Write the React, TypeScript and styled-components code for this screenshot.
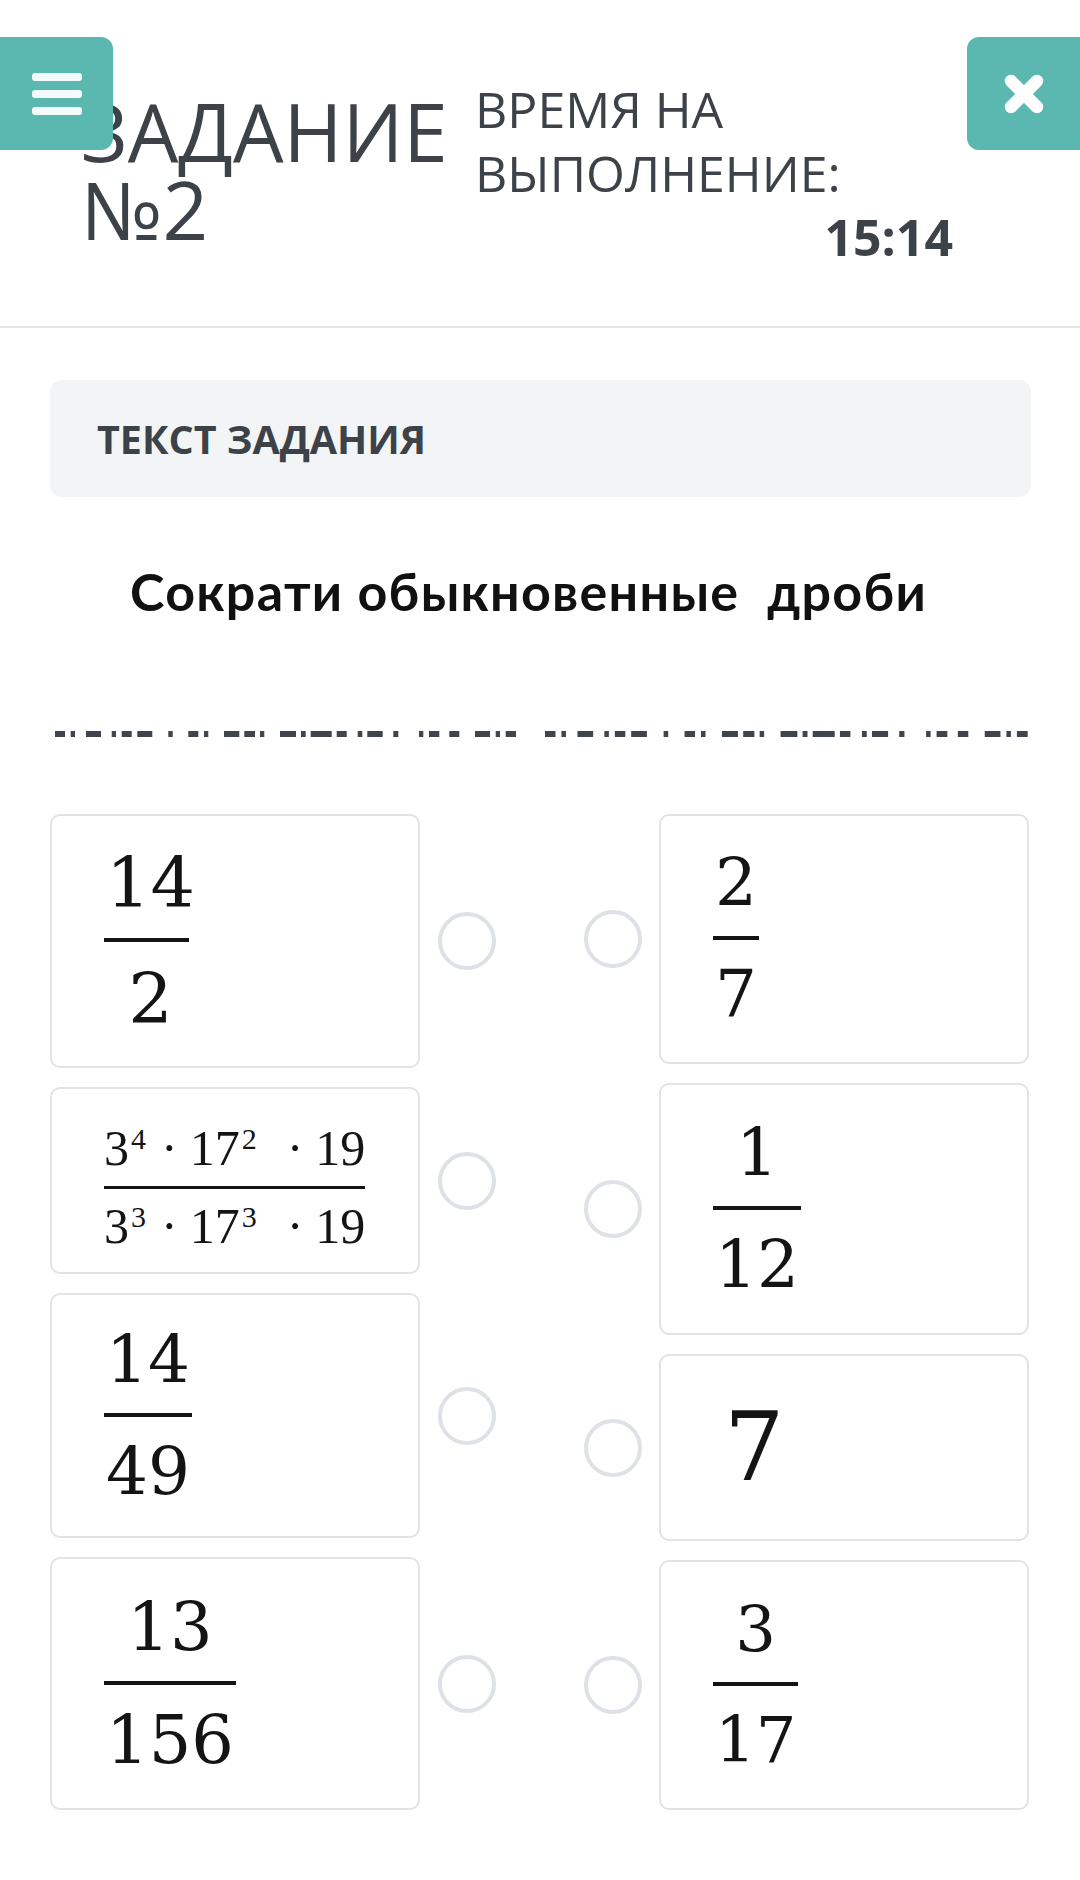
import React from "react";
import styled, { createGlobalStyle } from "styled-components";

const GlobalStyle = createGlobalStyle`
  html, body { margin: 0; padding: 0; background: #ffffff; }
  body { font-family: "Open Sans", "Noto Sans", sans-serif; color: #3d4249; }
  * { box-sizing: border-box; }
`;

const Page = styled.div`
  position: relative;
  width: 1080px;
  min-height: 1880px;
  background: #ffffff;
  overflow: hidden;
`;

const SideButton = styled.button<{ $side: "left" | "right" }>`
  position: absolute;
  top: 37px;
  ${(p) => (p.$side === "left" ? "left: 0; border-radius: 0 12px 12px 0;" : "right: 0; border-radius: 12px 0 0 12px;")}
  width: 113px;
  height: 113px;
  border: none;
  padding: 0;
  background: #5ab8b1;
  display: flex;
  align-items: center;
  justify-content: center;
  z-index: 2;
  cursor: pointer;
`;

const Header = styled.header`
  display: flex;
  align-items: flex-start;
  height: 328px;
  padding: 77px 0 0 81px;
  border-bottom: 2px solid #e4e5e7;
`;

const Title = styled.h1`
  margin: 15px 0 0;
  width: 380px;
  flex: none;
  font-size: 80px;
  line-height: 78px;
  font-weight: 400;
  color: #3d4249;
`;

const Timer = styled.div`
  margin-left: 14px;
  width: 478px;
  flex: none;
  display: flex;
  flex-direction: column;
  font-size: 50px;
  line-height: 64px;
  color: #3d4249;
`;

const TimerLabel = styled.div``;

const TimerValue = styled.div`
  font-weight: 700;
  text-align: right;
`;

const Main = styled.main`
  padding: 52px 49px 0 50px;
  display: flex;
  flex-direction: column;
`;

const TaskLabelBox = styled.div`
  height: 117px;
  border-radius: 12px;
  background: #f3f4f6;
  display: flex;
  align-items: center;
  padding-left: 47px;
  font-size: 39.5px;
  font-weight: 700;
  color: #3d4249;
`;

const Statement = styled.div`
  margin-top: 68px;
  padding-left: 80px;
  font-family: Lato, "Open Sans", sans-serif;
  font-weight: 700;
  font-size: 52px;
  line-height: 52px;
  letter-spacing: 1.3px;
  color: #111111;
  white-space: pre;
`;

const DashRow = styled.div`
  margin-top: 114px;
  padding-left: 5px;
  height: 6px;
  display: flex;
`;

const OptionsGrid = styled.div`
  margin-top: 77px;
  display: grid;
  grid-template-columns: 446px 447px;
  column-gap: 88px;
`;

const Column = styled.div`
  display: flex;
  flex-direction: column;
  gap: 19px;
`;

const OptionRow = styled.div<{ $gap: number }>`
  display: flex;
  align-items: center;
  gap: ${(p) => p.$gap}px;
`;

const Card = styled.div<{ $h: number; $offset?: number }>`
  width: 370px;
  height: ${(p) => p.$h}px;
  flex: none;
  border: 2px solid #e1e3e6;
  border-radius: 10px;
  background: #ffffff;
  display: flex;
  align-items: center;
  padding: ${(p) => p.$offset || 0}px 0 0 52px;
`;

const Radio = styled.span`
  width: 58px;
  height: 58px;
  flex: none;
  border-radius: 50%;
  border: 4px solid #dee2e6;
  background: #ffffff;
`;

const Frac = styled.div<{ $size: number; $serif?: string }>`
  display: inline-flex;
  flex-direction: column;
  align-items: stretch;
  font-family: ${(p) => p.$serif || '"DejaVu Serif"'}, serif;
  font-size: ${(p) => p.$size}px;
  line-height: 1;
  color: #141414;
`;

const FracPart = styled.div<{ $pad?: number }>`
  text-align: center;
  white-space: nowrap;
  padding: 0 ${(p) => (p.$pad === undefined ? 2 : p.$pad)}px;
`;

const FracBar = styled.div<{ $thick: number; $above: number; $below: number; $inset?: number }>`
  height: ${(p) => p.$thick}px;
  background: #141414;
  margin: ${(p) => p.$above}px ${(p) => p.$inset || 0}px ${(p) => p.$below}px 0;
`;

const Single = styled.div<{ $size: number }>`
  margin-left: 11px;
  font-family: "DejaVu Serif", serif;
  font-size: ${(p) => p.$size}px;
  line-height: 1;
  color: #141414;
`;

const Sup = styled.span`
  font-size: 30px;
  vertical-align: 16px;
  margin-left: 2px;
`;

const Dot = styled.span<{ $ml: number }>`
  margin-left: ${(p) => p.$ml}px;
  margin-right: 12px;
`;

const dashSegments: [number, number][] = [
  [0, 10], [15.7, 20], [31, 46], [56.7, 61], [66.7, 76.7], [82.3, 97.3],
  [113.3, 117.7], [133.3, 143.3], [149, 153.3], [169, 184.3], [189.3, 200],
  [205, 209.3], [225, 241], [246, 250.7], [255.7, 276.7], [281.7, 291.7],
  [302.7, 307.3], [312.3, 327.7], [338.3, 343.3], [364, 368.3], [374, 384.3],
  [394.3, 404.3], [420, 435], [440.7, 445], [450.7, 461],
];

const dashCopies = [
  { offset: 0, scale: 1 },
  { offset: 490, scale: 1.047 },
];

function DashedRule() {
  return (
    <svg width="973" height="6" viewBox="0 0 973 6">
      {dashCopies.map(({ offset, scale }) =>
        dashSegments.map(([a, b], i) => (
          <rect key={`${offset}-${i}`} x={offset + a * scale} y={0} width={(b - a) * scale} height={6} fill="#3f454d" />
        ))
      )}
    </svg>
  );
}

function MenuIcon() {
  return (
    <svg width="50" height="42" viewBox="0 0 50 42">
      <rect x="0" y="0" width="50" height="8" rx="3" fill="#f3fbfa" />
      <rect x="0" y="17" width="50" height="8" rx="3" fill="#f3fbfa" />
      <rect x="0" y="34" width="50" height="8" rx="3" fill="#f3fbfa" />
    </svg>
  );
}

function CloseIcon() {
  return (
    <svg width="42" height="42" viewBox="0 0 42 42">
      <path d="M8 8 L34 34 M34 8 L8 34" stroke="#ffffff" strokeWidth="12.5" strokeLinecap="round" />
    </svg>
  );
}

type SimpleFrac = { num: string; den: string; size: number; inset?: number };

function Fraction({ num, den, size, inset }: SimpleFrac) {
  return (
    <Frac $size={size}>
      <FracPart>{num}</FracPart>
      <FracBar $thick={4} $above={20} $below={22} $inset={inset} />
      <FracPart>{den}</FracPart>
    </Frac>
  );
}

function PowerRow({ a, b }: { a: string; b: string }) {
  return (
    <FracPart $pad={0}>
      3<Sup>{a}</Sup>
      <Dot $ml={15}>·</Dot>17<Sup>{b}</Sup>
      <Dot $ml={30}>·</Dot>19
    </FracPart>
  );
}

function PowerFraction() {
  return (
    <Frac $size={50} $serif='"Liberation Serif"'>
      <PowerRow a="4" b="2" />
      <FracBar $thick={3} $above={13} $below={12} />
      <PowerRow a="3" b="3" />
    </Frac>
  );
}

export default function App() {
  return (
    <Page>
      <GlobalStyle />
      <SideButton $side="left" aria-label="Меню">
        <MenuIcon />
      </SideButton>
      <SideButton $side="right" aria-label="Закрыть">
        <CloseIcon />
      </SideButton>

      <Header>
        <Title>ЗАДАНИЕ №2</Title>
        <Timer>
          <TimerLabel>ВРЕМЯ НА ВЫПОЛНЕНИЕ:</TimerLabel>
          <TimerValue>15:14</TimerValue>
        </Timer>
      </Header>

      <Main>
        <TaskLabelBox>ТЕКСТ ЗАДАНИЯ</TaskLabelBox>
        <Statement>Сократи обыкновенные  дроби</Statement>
        <DashRow>
          <DashedRule />
        </DashRow>

        <OptionsGrid>
          <Column>
            <OptionRow $gap={18}>
              <Card $h={254}>
                <Fraction num="14" den="2" size={70} inset={8} />
              </Card>
              <Radio />
            </OptionRow>
            <OptionRow $gap={18}>
              <Card $h={187} $offset={12}>
                <PowerFraction />
              </Card>
              <Radio />
            </OptionRow>
            <OptionRow $gap={18}>
              <Card $h={245}>
                <Fraction num="14" den="49" size={66} />
              </Card>
              <Radio />
            </OptionRow>
            <OptionRow $gap={18}>
              <Card $h={253}>
                <Fraction num="13" den="156" size={67} />
              </Card>
              <Radio />
            </OptionRow>
          </Column>

          <Column>
            <OptionRow $gap={17}>
              <Radio />
              <Card $h={250}>
                <Fraction num="2" den="7" size={66} />
              </Card>
            </OptionRow>
            <OptionRow $gap={17}>
              <Radio />
              <Card $h={252}>
                <Fraction num="1" den="12" size={66} />
              </Card>
            </OptionRow>
            <OptionRow $gap={17}>
              <Radio />
              <Card $h={187}>
                <Single $size={95}>7</Single>
              </Card>
            </OptionRow>
            <OptionRow $gap={17}>
              <Radio />
              <Card $h={250}>
                <Fraction num="3" den="17" size={64} />
              </Card>
            </OptionRow>
          </Column>
        </OptionsGrid>
      </Main>
    </Page>
  );
}
